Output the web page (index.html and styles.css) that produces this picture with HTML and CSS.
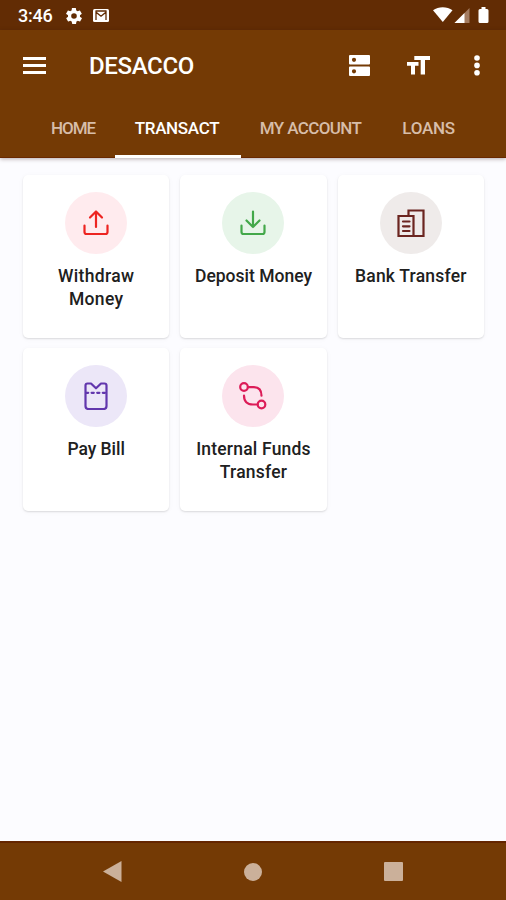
FILE: index.html
```html
<!DOCTYPE html>
<html lang="en">
<head>
<meta charset="utf-8">
<title>DESACCO</title>
<link rel="stylesheet" href="styles.css">
</head>
<body>
<div class="app">
  <div class="status">
    <span class="time">3:46</span>
    <svg class="gear" width="16" height="16" viewBox="2 2 20 20"><path fill="#fff" d="M19.4 13c0-.3.1-.6.1-1s0-.7-.1-1l2.100-1.600c.2-.2.200-.4.100-.6l-2-3.500c-.1-.2-.4-.3-.6-.2l-2.500 1c-.5-.4-1.100-.7-1.700-1l-.4-2.600c0-.3-.2-.5-.5-.5h-4c-.3 0-.5.200-.5.400l-.4 2.700c-.6.300-1.200.600-1.700 1l-2.500-1c-.2-.1-.5 0-.6.2l-2 3.500c-.1.200-.1.500.1.600L4.600 11c0 .3-.1.600-.1 1s0 .7.100 1l-2.100 1.600c-.2.200-.2.400-.1.600l2 3.500c.1.200.4.300.6.200l2.500-1c.5.400 1.100.7 1.700 1l.4 2.600c0 .3.200.5.500.5h4c.3 0 .5-.2.500-.4l.4-2.700c.6-.3 1.200-.6 1.700-1l2.500 1c.2.1.5 0 .6-.2l2-3.500c.1-.2.1-.5-.1-.6zM12 15.500a3.500 3.500 0 1 1 0-7 3.500 3.500 0 0 1 0 7z"/></svg>
    <svg class="mail" width="16" height="13" viewBox="0 0 16 13"><rect width="16" height="13" rx="1.500" fill="#fff"/><path d="M3 11V3.200l5 4 5-4V11M2.500 2h11" fill="none" stroke="#622c04" stroke-width="1.300"/></svg>
    <svg class="signals" width="58" height="18" viewBox="0 0 58 18"><path d="M0 3.200C5.500-.8 14-.8 19.500 3.200L9.800 15z" fill="#fff"/><path d="M36.500 1v15H21.500z" fill="#a47c61"/><path d="M31.500 6v10h-10z" fill="#fff"/><path d="M48.500 2V0h4v2H54q1.500 0 1.500 1.500v11Q55.500 16 54 16h-7q-1.500 0-1.500-1.500v-11Q45.500 2 47 2z" fill="#fff"/></svg>
  </div>
  <header class="header">
    <div class="toolbar">
      <svg class="menu" width="23" height="17" viewBox="0 0 23 17"><path d="M0 1.500h23M0 8.500h23M0 15.500h23" stroke="#fff" stroke-width="2.800"/></svg>
      <h1 class="title">DESACCO</h1>
      <svg class="dns" width="21" height="21" viewBox="0 0 21 21"><path fill="#fff" fill-rule="evenodd" d="M1 0h19q1 0 1 1v7.500q0 1-1 1H1q-1 0-1-1V1q0-1 1-1zM5 2.700a2.100 2.100 0 1 0 0 4.200 2.100 2.100 0 0 0 0-4.200zM1 11.500h19q1 0 1 1V20q0 1-1 1H1q-1 0-1-1v-7.500q0-1 1-1zM5 14.200a2.100 2.100 0 1 0 0 4.200 2.100 2.100 0 0 0 0-4.200z"/></svg>
      <svg class="type" width="23" height="19" viewBox="0 0 23 19"><path fill="#fff" d="M7.300 0H23v3.900h-5V18.500h-4.300V3.900H7.300zM0 6h11.500v3.800H8v8.700H4V9.800H0z"/></svg>
      <svg class="dots" width="6" height="21" viewBox="0 0 6 21"><g fill="#fff"><circle cx="3" cy="3" r="2.800"/><circle cx="3" cy="10.400" r="2.800"/><circle cx="3" cy="17.800" r="2.800"/></g></svg>
    </div>
    <nav class="tabs">
      <a class="tab home">HOME</a>
      <a class="tab transact active">TRANSACT</a>
      <a class="tab account">MY ACCOUNT</a>
      <a class="tab loans">LOANS</a>
    </nav>
  </header>
  <main class="cards">
    <article class="card">
      <div class="badge red"><svg width="28" height="28" viewBox="0 0 28 28"><path d="M14 18V2.500M8 8.500l6-6 6 6M2.500 16.500V23q0 2 2 2h19q2 0 2-2v-6.500"/></svg></div>
      <p class="label withdraw">Withdraw<br>Money</p>
    </article>
    <article class="card">
      <div class="badge green"><svg width="28" height="28" viewBox="0 0 28 28"><path d="M14 2.500V18M7.500 11.500 14 18l6.500-6.500M2.500 16.500V23q0 2 2 2h19q2 0 2-2v-6.500"/></svg></div>
      <p class="label deposit">Deposit Money</p>
    </article>
    <article class="card">
      <div class="badge brown"><svg width="28" height="28" viewBox="0 0 28 28"><path d="M11.500 7V1.500h15v25.500H1.500V7h15v20"/><path d="M6 12.500h6.500M6 17.300h6.500M6 22h6.500"/></svg></div>
      <p class="label bank">Bank Transfer</p>
    </article>
    <article class="card">
      <div class="badge purple"><svg width="28" height="28" viewBox="0 0 28 28"><path d="M5.500 1.500H9l5 4.800 5-4.800h3.500q2 0 2 2V24q0 3-3 3h-15q-3 0-3-3V3.500q0-2 2-2z"/><path class="perforation" d="M4 10.800h20"/></svg></div>
      <p class="label pay">Pay Bill</p>
    </article>
    <article class="card">
      <div class="badge pink"><svg width="28" height="28" viewBox="0 0 28 28"><circle cx="5" cy="5" r="3.800"/><circle cx="22.500" cy="22.500" r="3.800"/><path d="M9 5.200h5.500q8 0 8 8.500M18.500 22.500H14q-9 0-9-9"/></svg></div>
      <p class="label internal">Internal Funds<br>Transfer</p>
    </article>
  </main>
  <footer class="navbar">
    <svg width="19" height="21" viewBox="0 0 19 21"><path d="M0 10.500 18.500 0v21z" fill="#cbb09a"/></svg>
    <i class="circle"></i>
    <i class="square"></i>
  </footer>
</div>
</body>
</html>
```
FILE: styles.css
```css
* { box-sizing: border-box; }
body { margin: 0; font-family: Roboto, "Liberation Sans", sans-serif; }
svg { display: block; flex: none; }
.app { width: 506px; height: 900px; display: flex; flex-direction: column; background: #fcfcff; overflow: hidden; }
.status { height: 30px; flex: none; display: flex; align-items: center; background: #622c04; padding: 1px 15px 0 18px; color: #fff; }
.time { width: 48px; font-size: 18px; font-weight: 500; letter-spacing: -0.2px; white-space: nowrap; }
.mail { margin-left: 11px; }
.signals { margin-left: auto; }
.header { height: 128px; flex: none; background: #743a05; border-bottom: 1px solid #692800; box-shadow: 0 1px 4px rgba(50, 20, 20, .35); }
.toolbar { height: 70px; display: flex; align-items: center; padding: 0 26px 0 23px; }
.title { margin: 2px 0 0 43px; width: 260px; font-size: 24px; font-weight: 500; letter-spacing: -0.35px; line-height: 30px; color: #fff; }
.type { margin-left: 37px; }
.dots { margin-left: auto; }
.tabs { height: 58px; display: flex; padding-left: 31px; }
.tab { text-align: center; line-height: 56px; font-size: 17px; font-weight: 500; color: #d7bda9; white-space: nowrap; }
.home { width: 84px; letter-spacing: -1px; }
.transact { width: 126px; padding-right: 2px; letter-spacing: -0.3px; }
.account { width: 141px; padding-right: 2px; letter-spacing: -0.6px; }
.loans { width: 93px; letter-spacing: -0.3px; }
.active { color: #fff; border-bottom: 3px solid #fff; }
.cards { flex: 1; display: grid; grid-template-columns: repeat(3, 1fr); grid-auto-rows: 163px; gap: 10px 11px; padding: 17px 22px 0 23px; }
.card { display: flex; flex-direction: column; align-items: center; background: #fff; border-radius: 5px; padding-top: 17px; box-shadow: 0 1px 2px rgba(0, 0, 0, .13), 0 1px 8px rgba(0, 0, 0, .025); }
.badge { width: 62px; height: 62px; border-radius: 50%; display: flex; align-items: center; justify-content: center; }
.badge svg { fill: none; stroke: currentColor; stroke-width: 2.2; stroke-linejoin: round; stroke-linecap: round; }
.red { background: #ffebee; color: #ed2421; }
.green { background: #e7f5e9; color: #43a84a; }
.brown { background: #efebea; color: #6b2520; }
.badge.brown svg { stroke-linejoin: miter; }
.purple { background: #ece7f8; color: #6237ad; }
.perforation { stroke-dasharray: 2.2 3.4; }
.pink { background: #fce4ed; color: #dc1c58; }
.label { margin: 11px 0 0; text-align: center; font-size: 17.5px; line-height: 22.500px; font-weight: 500; color: #202020; white-space: nowrap; }
.withdraw { letter-spacing: .35px; }
.deposit { letter-spacing: 0; }
.bank { letter-spacing: .2px; }
.pay { letter-spacing: -.05px; }
.internal { letter-spacing: .2px; }
.navbar { height: 59px; flex: none; display: flex; justify-content: space-between; align-items: center; padding: 0 103px; background: #743a05; border-top: 2px solid #642500; }
.circle { width: 18px; height: 18px; border-radius: 50%; background: #cbb09a; }
.square { width: 19px; height: 19px; border-radius: 1px; background: #cbb09a; }
```
